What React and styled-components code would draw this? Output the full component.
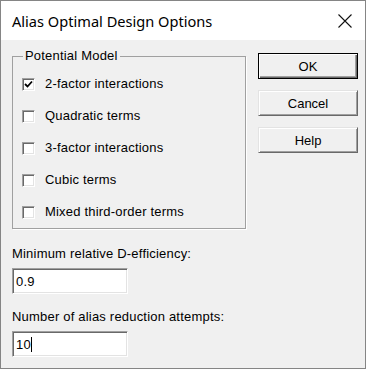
import styled, { createGlobalStyle } from "styled-components";

const Global = createGlobalStyle`
  html, body {
    margin: 0;
    padding: 0;
    background: #f0f0f0;
  }
  * { box-sizing: border-box; }
`;

const opcoes = [
  { nome: "2-factor interactions", marcado: true },
  { nome: "Quadratic terms", marcado: false },
  { nome: "3-factor interactions", marcado: false },
  { nome: "Cubic terms", marcado: false },
  { nome: "Mixed third-order terms", marcado: false },
];

export default function App() {
  return (
    <>
      <Global />
      <Janela>
        <BarraTitulo>
          <Titulo>Alias Optimal Design Options</Titulo>
          <Fechar>
            <svg width="14" height="14" viewBox="0 0 14 14">
              <path d="M0.5 0.5 L13.5 13.5 M13.5 0.5 L0.5 13.5" stroke="#111" strokeWidth="1.1" fill="none" />
            </svg>
          </Fechar>
        </BarraTitulo>
        <Corpo>
          <Esquerda>
            <Grupo>
              <Legenda>Potential Model</Legenda>
              {opcoes.map((o) => (
                <Linha key={o.nome}>
                  <Caixa>
                    {o.marcado && (
                      <svg width="9" height="9" viewBox="0 0 9 9">
                        <path d="M1 4 L3.5 6.5 L8 1.5" stroke="#000" strokeWidth="1.8" fill="none" />
                      </svg>
                    )}
                  </Caixa>
                  <Rotulo>{o.nome}</Rotulo>
                </Linha>
              ))}
            </Grupo>
            <Campo espaco={17}>
              <Rotulo>Minimum relative D-efficiency:</Rotulo>
              <Entrada>0.9</Entrada>
            </Campo>
            <Campo espaco={15}>
              <Rotulo>Number of alias reduction attempts:</Rotulo>
              <Entrada>
                10<Cursor />
              </Entrada>
            </Campo>
          </Esquerda>
          <Botoes>
            <Botao padrao>OK</Botao>
            <Botao>Cancel</Botao>
            <Botao>Help</Botao>
          </Botoes>
        </Corpo>
      </Janela>
    </>
  );
}

const Janela = styled.div`
  width: 366px;
  height: 369px;
  border: 1px solid #858585;
  display: flex;
  flex-direction: column;
  background: #f0f0f0;
  font-family: "Liberation Sans", Arial, sans-serif;
  color: #000;
`;

const BarraTitulo = styled.div`
  height: 39px;
  background: #fff;
  display: flex;
  align-items: center;
  justify-content: space-between;
  padding: 0 13px 0 11px;
`;

const Titulo = styled.div`
  font-family: "Noto Sans", "Open Sans", sans-serif;
  font-size: 14.6px;
  margin-top: 1px;
  color: #000;
`;

const Fechar = styled.div`
  display: flex;
  width: 14px;
  height: 14px;
`;

const Corpo = styled.div`
  flex: 1;
  display: flex;
  justify-content: space-between;
  padding: 9px 7px 0 11px;
`;

const Esquerda = styled.div`
  display: flex;
  flex-direction: column;
  width: 234px;
`;

const Grupo = styled.fieldset`
  margin: 0;
  width: 234px;
  border: 1px solid #a0a0a0;
  box-shadow: 1px 1px 0 #fff;
  padding: 5px 0 0 9px;
  display: flex;
  flex-direction: column;
`;

const Legenda = styled.legend`
  font-size: 13px;
  letter-spacing: 0.2px;
  line-height: 14px;
  padding: 0 2px;
  margin-left: 1px;
`;

const Linha = styled.div`
  height: 32px;
  display: flex;
  align-items: center;
  gap: 10px;
`;

const Caixa = styled.div`
  width: 13px;
  height: 13px;
  background: #fff;
  border-top: 1px solid #a0a0a0;
  border-left: 1px solid #a0a0a0;
  border-right: 1px solid #fff;
  border-bottom: 1px solid #fff;
  box-shadow: inset 1px 1px 0 #696969, inset -1px -1px 0 #e3e3e3;
  display: flex;
  align-items: center;
  justify-content: center;
`;

const Rotulo = styled.span`
  font-size: 13px;
  letter-spacing: 0.2px;
  line-height: 16px;
  white-space: nowrap;
`;

const Campo = styled.div`
  display: flex;
  flex-direction: column;
  gap: 6px;
  margin-top: ${(p) => p.espaco}px;
`;

const Entrada = styled.div`
  width: 116px;
  height: 26px;
  background: #fff;
  border-top: 1px solid #a0a0a0;
  border-left: 1px solid #a0a0a0;
  border-right: 1px solid #fff;
  border-bottom: 1px solid #fff;
  box-shadow: inset 1px 1px 0 #696969, inset -1px -1px 0 #e3e3e3;
  font-size: 13px;
  letter-spacing: 0.2px;
  padding-left: 3px;
  display: flex;
  align-items: center;
`;

const Cursor = styled.span`
  display: inline-block;
  width: 1px;
  height: 15px;
  background: #000;
`;

const Botoes = styled.div`
  display: flex;
  flex-direction: column;
  gap: 11px;
  padding-top: 4px;
`;

const Botao = styled.button`
  width: 100px;
  height: 26px;
  font-family: "Liberation Sans", Arial, sans-serif;
  font-size: 13px;
  color: #000;
  background: #f0f0f0;
  padding: 0;
  border: 1px solid ${(p) => (p.padrao ? "#000" : "#e3e3e3")};
  box-shadow: ${(p) =>
    p.padrao
      ? "inset 1px 1px 0 #fff, inset -1px -1px 0 #696969, inset -2px -2px 0 #a0a0a0"
      : "inset 1px 1px 0 #fff, inset -1px -1px 0 #a0a0a0"};
  ${(p) => (p.padrao ? "" : "border-right-color: #696969; border-bottom-color: #696969;")}
`;
